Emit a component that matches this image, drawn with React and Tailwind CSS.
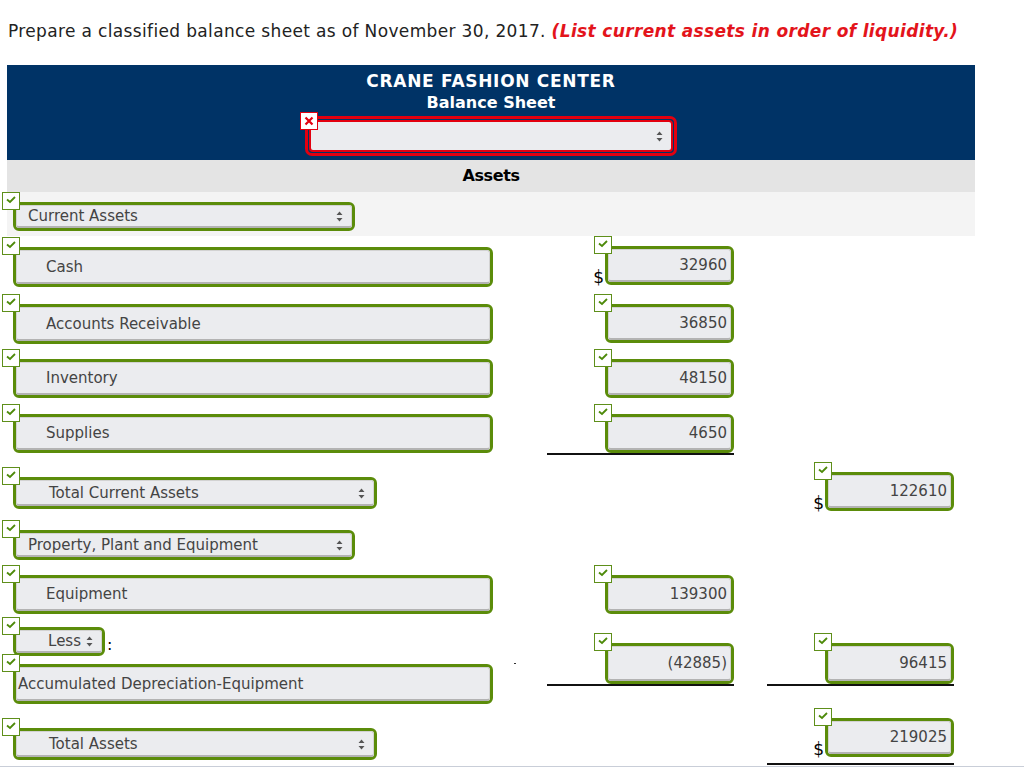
import React from "react";

function Check() {
  return (
    <span className="absolute -left-[11px] -top-[10px] z-10 w-[18px] h-[18px] bg-white border border-[#5e8f1a] flex items-start justify-center pt-[2px]">
      <svg width="12" height="9" viewBox="0 0 12 9">
        <path d="M2 4.5 L5 7 L10 2" fill="none" stroke="#4d8a0a" strokeWidth="1.8" />
      </svg>
    </span>
  );
}

function Arrows() {
  return (
    <svg width="7" height="11" viewBox="0 0 7 11" className="shrink-0">
      <path d="M3.5 0.5 L6.5 4 H0.5 Z M3.5 10.5 L6.5 7 H0.5 Z" fill="#555" />
    </svg>
  );
}

function Field({ cls, inner, children }) {
  return (
    <div className={`relative ${cls}`}>
      <Check />
      <div className="h-full rounded-[6px] border-[3px] border-[#5b8c0a] bg-[#ebecef]">
        <div
          className={`h-full rounded-[3px] border border-[#d2d2d2] border-b-2 border-b-[#b3b3b3] flex items-center pt-[1px] text-[15px] text-[#444] ${inner}`}
        >
          {children}
        </div>
      </div>
    </div>
  );
}

function Amount({ value, dollar }) {
  return (
    <div className="flex items-end">
      {dollar && <span className="text-[17px] leading-[18px] text-black mr-[1px] -mb-[1px]">$</span>}
      <Field cls="w-[129px] h-[39px]" inner="justify-end pr-[3px]">
        {value}
      </Field>
    </div>
  );
}

export default function App() {
  return (
    <div className="w-[1024px] h-[771px] bg-white font-['DejaVu_Sans',Verdana,sans-serif] overflow-hidden">
      <div className="h-[65px] pt-[21px] pl-[8px] text-[17px] leading-[20px] tracking-[0.35px] text-[#222]">
        Prepare a classified balance sheet as of November 30, 2017.{" "}
        <span className="text-[#e3141b] italic font-bold">(List current assets in order of liquidity.)</span>
      </div>

      <div className="ml-[7px] w-[968px]">
        <div className="h-[95px] bg-[#003366] flex flex-col items-center pt-[5px] text-white font-bold leading-[22px]">
          <div className="text-[17px] tracking-[0.7px]">CRANE FASHION CENTER</div>
          <div className="text-[16px]">Balance Sheet</div>
          <div className="relative mt-[2px] w-[372px] h-[40px] rounded-[7px] border-[3px] border-[#e3000f] p-[1px]">
            <span className="absolute -left-[8px] -top-[7px] w-[18px] h-[18px] bg-white border border-[#e3000f] flex items-center justify-center">
              <svg width="10" height="10" viewBox="0 0 10 10">
                <path d="M1.5 1.5 L8.5 8.5 M8.5 1.5 L1.5 8.5" stroke="#e3000f" strokeWidth="2.2" />
              </svg>
            </span>
            <div className="h-full rounded-[4px] border-2 border-[#e3000f] bg-[#ebecef] flex items-center justify-end pr-[8px]">
              <Arrows />
            </div>
          </div>
        </div>
        <div className="h-[32px] bg-[#e4e4e4] flex items-center justify-center font-bold text-[16px] text-black tracking-tight">
          Assets
        </div>
        <div className="h-[44px] bg-[#f4f4f4] pt-[10px] pl-[6px]">
          <Field cls="w-[342px] h-[29px]" inner="justify-between pl-[11px] pr-[8px]">
            <span>Current Assets</span>
            <Arrows />
          </Field>
        </div>
      </div>

      {/* Cash */}
      <div className="flex h-[57px]">
        <div className="w-[547px] pl-[13px] pt-[11px]">
          <Field cls="w-[480px] h-[40px]" inner="pl-[29px]">Cash</Field>
        </div>
        <div className="w-[187px] pt-[10px] flex justify-end items-start">
          <Amount value="32960" dollar />
        </div>
      </div>

      {/* Accounts Receivable */}
      <div className="flex h-[55px]">
        <div className="w-[547px] pl-[13px] pt-[11px]">
          <Field cls="w-[480px] h-[40px]" inner="pl-[29px]">Accounts Receivable</Field>
        </div>
        <div className="w-[187px] pt-[11px] flex justify-end items-start">
          <Amount value="36850" />
        </div>
      </div>

      {/* Inventory */}
      <div className="flex h-[55px]">
        <div className="w-[547px] pl-[13px] pt-[11px]">
          <Field cls="w-[480px] h-[39px]" inner="pl-[29px]">Inventory</Field>
        </div>
        <div className="w-[187px] pt-[11px] flex justify-end items-start">
          <Amount value="48150" />
        </div>
      </div>

      {/* Supplies */}
      <div className="flex h-[55px]">
        <div className="w-[547px] pl-[13px] pt-[11px]">
          <Field cls="w-[480px] h-[39px]" inner="pl-[29px]">Supplies</Field>
        </div>
        <div className="w-[187px] mt-[11px] self-start flex justify-end items-start border-b-2 border-[#111]">
          <Amount value="4650" />
        </div>
      </div>

      {/* Total Current Assets */}
      <div className="flex h-[61px]">
        <div className="w-[547px] pl-[13px] pt-[19px]">
          <Field cls="w-[364px] h-[32px]" inner="justify-between pl-[32px] pr-[8px]">
            <span>Total Current Assets</span>
            <Arrows />
          </Field>
        </div>
        <div className="w-[187px]" />
        <div className="w-[187px] ml-[33px] pt-[14px] flex justify-end items-start">
          <Amount value="122610" dollar />
        </div>
      </div>

      {/* Property, Plant and Equipment */}
      <div className="flex h-[45px]">
        <div className="w-[547px] pl-[13px] pt-[11px]">
          <Field cls="w-[342px] h-[30px]" inner="justify-between pl-[11px] pr-[8px]">
            <span>Property, Plant and Equipment</span>
            <Arrows />
          </Field>
        </div>
      </div>

      {/* Equipment */}
      <div className="flex h-[52px]">
        <div className="w-[547px] pl-[13px] pt-[11px]">
          <Field cls="w-[480px] h-[39px]" inner="pl-[29px]">Equipment</Field>
        </div>
        <div className="w-[187px] pt-[11px] flex justify-end items-start">
          <Amount value="139300" />
        </div>
      </div>

      {/* Less: Accumulated Depreciation */}
      <div className="flex h-[101px]">
        <div className="relative w-[547px] pl-[13px] pt-[11px]">
          <div className="flex items-end">
            <Field cls="w-[92px] h-[29px]" inner="justify-end gap-[5px] pr-[8px]">
              <span>Less</span>
              <Arrows />
            </Field>
            <span className="text-[16px] leading-[16px] ml-[2px] mb-[3px]">:</span>
          </div>
          <div className="mt-[8px]">
            <Field cls="w-[480px] h-[40px]" inner="pl-[1px]">Accumulated Depreciation-Equipment</Field>
          </div>
          <span className="absolute left-[514px] top-[47px] w-[2px] h-[1px] bg-[#333]" />
        </div>
        <div className="w-[187px] mt-[27px] self-start flex justify-end border-b-2 border-[#111]">
          <Field cls="w-[129px] h-[41px]" inner="justify-end pr-[3px]">(42885)</Field>
        </div>
        <div className="w-[187px] ml-[33px] mt-[27px] self-start flex justify-end border-b-2 border-[#111]">
          <Field cls="w-[129px] h-[41px]" inner="justify-end pr-[3px]">96415</Field>
        </div>
      </div>

      {/* Total Assets */}
      <div className="flex h-[49px]">
        <div className="w-[547px] pl-[13px] pt-[11px]">
          <Field cls="w-[364px] h-[32px]" inner="justify-between pl-[32px] pr-[8px]">
            <span>Total Assets</span>
            <Arrows />
          </Field>
        </div>
        <div className="w-[187px]" />
        <div className="w-[187px] ml-[33px] pt-[1px] pb-[6px] self-start flex justify-end items-start border-b-2 border-[#111]">
          <Amount value="219025" dollar />
        </div>
      </div>
      <div className="h-[1px] bg-[#c9ced8]" />
    </div>
  );
}
